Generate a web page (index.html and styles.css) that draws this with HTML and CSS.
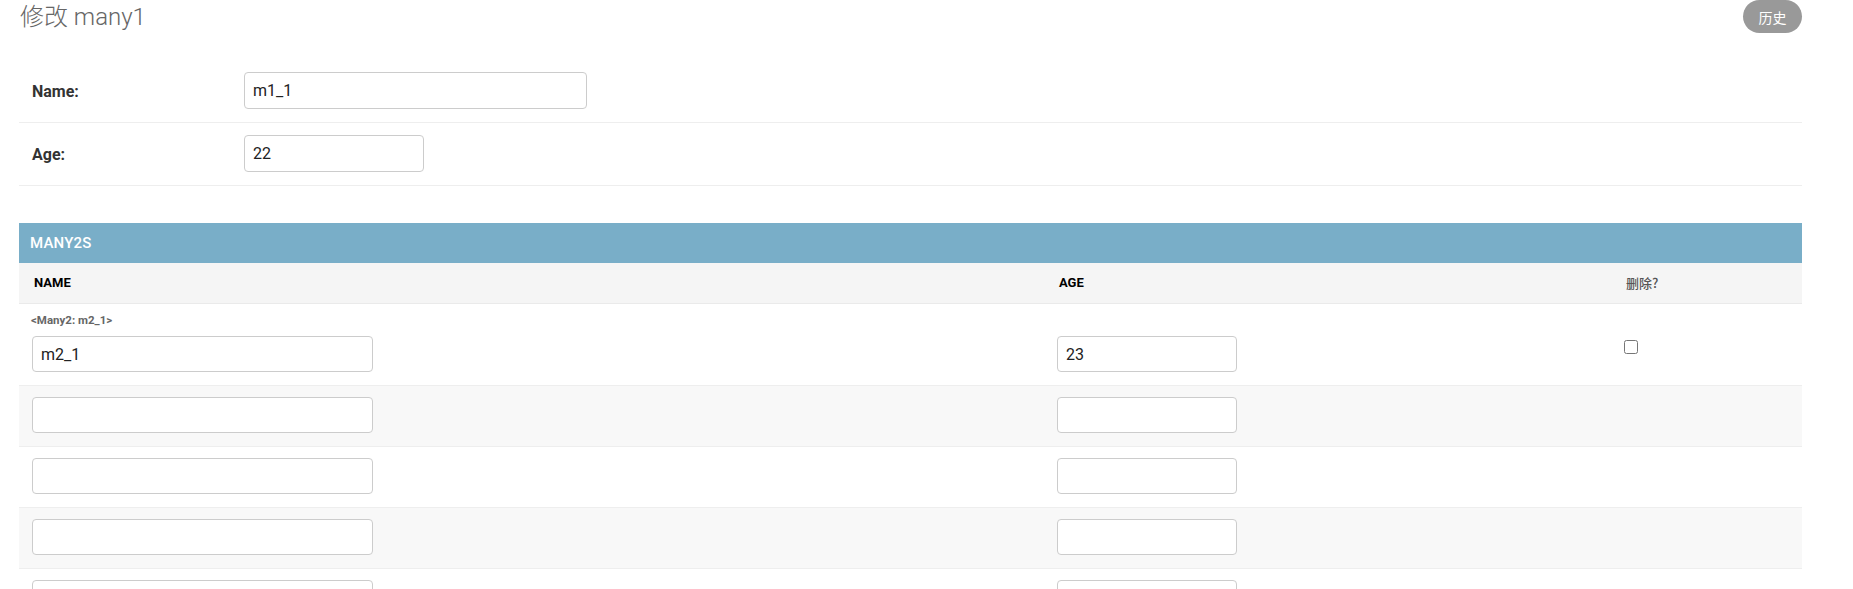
FILE: index.html
```html
<!DOCTYPE html>
<html lang="zh">
<head>
<meta charset="utf-8">
<title>修改 many1</title>
<link rel="stylesheet" href="styles.css">
</head>
<body>
<div class="content">
  <div class="page-head">
    <h1 class="title">修改 many1</h1>
    <a class="history-btn" href="#">历史</a>
  </div>

  <fieldset class="main-fields">
    <div class="form-row">
      <label class="field-label">Name:</label>
      <input class="text-input wide" type="text" value="m1_1">
    </div>
    <div class="form-row">
      <label class="field-label">Age:</label>
      <input class="text-input narrow" type="text" value="22">
    </div>
  </fieldset>

  <div class="inline-group">
    <h2 class="inline-title">MANY2S</h2>
    <table class="inline-table">
      <colgroup>
        <col class="col-name">
        <col class="col-age">
        <col class="col-del">
      </colgroup>
      <thead>
        <tr>
          <th class="th-strong">NAME</th>
          <th class="th-strong">AGE</th>
          <th class="th-quiet">删除?</th>
        </tr>
      </thead>
      <tbody>
        <tr class="has-original">
          <td class="cell-original">
            <p class="original-label">&lt;Many2: m2_1&gt;</p>
            <input class="text-input inline-name" type="text" value="m2_1">
          </td>
          <td><input class="text-input inline-age" type="text" value="23"></td>
          <td><input class="del-check" type="checkbox"></td>
        </tr>
        <tr class="row-alt">
          <td><input class="text-input inline-name" type="text"></td>
          <td><input class="text-input inline-age" type="text"></td>
          <td></td>
        </tr>
        <tr>
          <td><input class="text-input inline-name" type="text"></td>
          <td><input class="text-input inline-age" type="text"></td>
          <td></td>
        </tr>
        <tr class="row-alt">
          <td><input class="text-input inline-name" type="text"></td>
          <td><input class="text-input inline-age" type="text"></td>
          <td></td>
        </tr>
        <tr>
          <td><input class="text-input inline-name" type="text"></td>
          <td><input class="text-input inline-age" type="text"></td>
          <td></td>
        </tr>
      </tbody>
    </table>
  </div>
</div>
</body>
</html>
```

FILE: styles.css
```css
html, body {
  margin: 0;
  padding: 0;
  overflow: hidden;
  background: #fff;
}

body {
  font-family: Roboto, "Noto Sans CJK SC", "Liberation Sans", sans-serif;
  color: #333;
}

.content {
  padding: 0 51px 0 19px;
}

.page-head {
  display: flex;
  justify-content: space-between;
  align-items: flex-start;
  height: 33px;
}

.title {
  margin: 1px 0 0 1px;
  font-size: 24px;
  font-weight: 300;
  line-height: 33px;
  color: #666;
}

.history-btn {
  display: flex;
  align-items: center;
  justify-content: center;
  width: 59px;
  height: 33px;
  border-radius: 17px;
  background: #999;
  color: #fff;
  font-size: 14px;
  text-decoration: none;
  font-family: "Noto Sans CJK SC", Roboto, sans-serif;
}

.main-fields {
  margin: 27px 0 0 0;
  padding: 0;
  border: none;
  min-width: 0;
}

.form-row {
  display: flex;
  align-items: center;
  padding: 12px 13px 13px 13px;
  border-bottom: 1px solid #eee;
}

.field-label {
  width: 212px;
  flex: none;
  font-size: 16px;
  font-weight: 700;
  color: #333;
  padding-top: 2px;
}

.text-input {
  box-sizing: border-box;
  display: block;
  height: 37px;
  padding: 0 8px;
  border: 1px solid #ccc;
  border-radius: 4px;
  background: #fff;
  font-family: Roboto, sans-serif;
  font-size: 16px;
  color: #222;
  outline: none;
}

.wide { width: 343px; }
.narrow { width: 180px; }

.inline-group {
  margin-top: 37px;
}

.inline-title {
  margin: 0;
  height: 40px;
  padding: 0 11px;
  display: flex;
  align-items: center;
  background: #79aec8;
  color: #fff;
  font-size: 15px;
  font-weight: 500;
  letter-spacing: 0.2px;
}

.inline-table {
  width: 100%;
  table-layout: fixed;
  border-collapse: collapse;
}

.col-name { width: 1025px; }
.col-age { width: 567px; }
.col-del { width: 191px; }

.inline-table thead th {
  height: 40px;
  padding: 0 15px;
  text-align: left;
  background: #f5f5f5;
  border-bottom: 1px solid #eaeaea;
  font-size: 13px;
  line-height: 16px;
}

.th-strong {
  font-weight: 700;
  color: #000;
}

.th-quiet {
  font-weight: 500;
  color: #555;
  font-family: "Noto Sans CJK SC", Roboto, sans-serif;
}

.inline-table td {
  padding: 11px 13px 13px 13px;
  vertical-align: top;
  border-bottom: 1px solid #eee;
}

.inline-table tr.has-original td {
  padding-top: 32px;
}

.cell-original {
  position: relative;
}

.original-label {
  position: absolute;
  top: 9px;
  left: 12px;
  margin: 0;
  font-size: 11.5px;
  font-weight: 700;
  line-height: 14px;
  color: #666;
}

.row-alt td {
  background: #f8f8f8;
}

.inline-name { width: 341px; height: 36px; }
.inline-age { width: 180px; height: 36px; }

.del-check {
  display: block;
  margin: 4px 0 0 0;
  width: 14px;
  height: 14px;
}
```
